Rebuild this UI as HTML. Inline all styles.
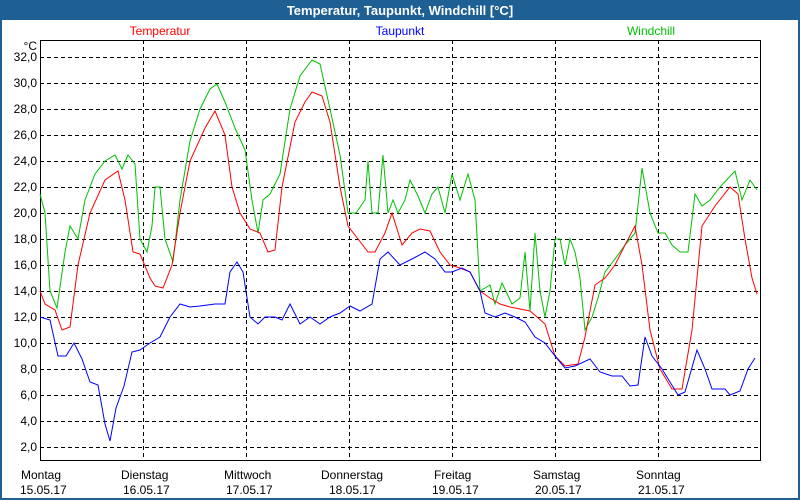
<!DOCTYPE html>
<html><head><meta charset="utf-8"><style>
html,body{margin:0;padding:0;width:800px;height:500px;overflow:hidden;background:#fff}
svg{display:block}
text{font-family:"Liberation Sans","DejaVu Sans",sans-serif;font-size:12px}
</style></head><body>
<svg width="800" height="500" xmlns="http://www.w3.org/2000/svg">
<rect x="0" y="0" width="800" height="500" fill="#1e5f94"/>
<rect x="2" y="20" width="796" height="478" fill="#fff"/>
<text x="400" y="15" fill="#fff" font-weight="bold" text-anchor="middle" style="font-size:13px">Temperatur, Taupunkt, Windchill [°C]</text>
<text x="160" y="35" fill="#ff0000" text-anchor="middle">Temperatur</text>
<text x="400" y="35" fill="#0000ff" text-anchor="middle">Taupunkt</text>
<text x="651" y="35" fill="#00c000" text-anchor="middle">Windchill</text>
<g stroke="#000" stroke-dasharray="4,3" stroke-width="1">
<path d="M40 57.5H760M40 83.5H760M40 109.5H760M40 135.5H760M40 161.5H760M40 187.5H760M40 213.5H760M40 239.5H760M40 265.5H760M40 291.5H760M40 317.5H760M40 343.5H760M40 369.5H760M40 395.5H760M40 421.5H760M40 447.5H760"/>
<path d="M143.5 40V460M246.5 40V460M349.5 40V460M452.5 40V460M555.5 40V460M658.5 40V460"/>
</g>
<rect x="40.5" y="40.5" width="720" height="420" fill="none" stroke="#000"/>
<g fill="#000" text-anchor="end">
<text x="37" y="50">°C</text>
<text x="37" y="61">32,0</text><text x="37" y="87">30,0</text><text x="37" y="113">28,0</text><text x="37" y="139">26,0</text>
<text x="37" y="165">24,0</text><text x="37" y="191">22,0</text><text x="37" y="217">20,0</text><text x="37" y="243">18,0</text>
<text x="37" y="269">16,0</text><text x="37" y="295">14,0</text><text x="37" y="321">12,0</text><text x="37" y="347">10,0</text>
<text x="37" y="373">8,0</text><text x="37" y="399">6,0</text><text x="37" y="425">4,0</text><text x="37" y="451">2,0</text>
</g>
<g fill="#000">
<text x="21" y="479">Montag</text><text x="20" y="494">15.05.17</text>
<text x="121" y="479">Dienstag</text><text x="123" y="494">16.05.17</text>
<text x="224" y="479">Mittwoch</text><text x="226" y="494">17.05.17</text>
<text x="321" y="479">Donnerstag</text><text x="329" y="494">18.05.17</text>
<text x="434" y="479">Freitag</text><text x="432" y="494">19.05.17</text>
<text x="533" y="479">Samstag</text><text x="535" y="494">20.05.17</text>
<text x="636" y="479">Sonntag</text><text x="638" y="494">21.05.17</text>
</g>
<g fill="none" stroke-width="1">
<polyline stroke="#00c000" points="40,194 45,213 50,291 57,308 65,252 70,226 78,239 85,200 95,174 105,161 115,155 122,169 128,155 135,164 140,239 147,252 152,226 155,187 160,187 165,239 173,262 180,200 190,141 200,109 210,89 217,84 225,102 235,128 245,150 252,200 258,233 263,200 270,194 280,174 290,109 300,76 312,60 320,64 330,109 340,155 348,213 356,213 365,200 368,161 372,213 378,213 383,155 388,213 393,200 398,213 405,200 410,180 418,196 425,213 432,194 438,187 445,213 452,174 460,200 468,174 475,200 480,291 490,285 495,304 502,283 512,304 520,298 525,252 530,311 535,233 540,291 545,317 550,291 555,239 560,239 565,265 570,239 575,252 580,278 585,330 592,317 598,298 605,272 615,259 625,245 635,233 642,168 650,213 658,233 665,233 672,245 680,252 688,252 695,194 702,206 710,200 720,187 735,171 742,200 750,180 757,190"/>
<polyline stroke="#ff0000" points="40,291 45,304 55,310 62,330 70,327 78,265 90,213 105,180 118,171 125,200 133,252 140,254 150,278 155,286 163,288 172,265 180,213 190,161 205,128 215,111 225,135 232,187 240,213 250,229 260,233 268,252 275,250 282,187 295,122 305,102 312,92 322,96 330,122 340,187 348,226 358,239 368,252 375,252 385,233 392,213 402,245 412,233 420,229 430,231 440,252 450,265 460,268 470,272 480,291 490,298 500,304 510,307 520,309 530,311 537,317 545,324 555,356 565,366 578,364 585,337 595,285 605,278 615,265 625,245 635,226 642,265 650,330 660,369 672,389 682,389 692,330 702,226 715,206 730,187 738,194 745,239 752,278 757,294"/>
<polyline stroke="#0000ff" points="40,317 50,320 58,356 66,356 74,343 82,359 90,382 98,385 105,424 110,441 116,408 124,386 132,352 140,350 150,343 160,337 170,317 180,304 190,307 200,306 215,304 225,304 230,272 237,262 243,272 250,317 258,324 265,317 275,317 282,320 290,304 300,324 310,317 320,324 330,317 340,313 350,306 360,311 372,304 380,259 388,252 400,265 412,259 425,252 435,259 445,272 452,272 462,268 470,272 480,291 485,313 495,317 505,313 515,317 525,322 535,337 545,343 555,356 565,368 575,366 590,359 600,372 612,376 622,376 630,386 638,385 645,337 652,356 662,369 670,382 678,395 685,392 697,350 705,369 712,389 725,389 730,395 740,391 748,369 755,358"/>
</g>
</svg>
</body></html>
